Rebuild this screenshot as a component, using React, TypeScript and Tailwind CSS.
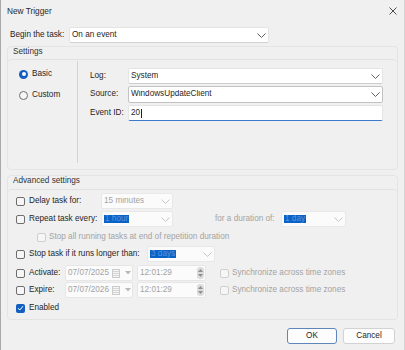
import React from "react";

const font = "font-['Liberation_Sans',Arial,sans-serif]";

function Chevron({ faded = false }: { faded?: boolean }) {
  return (
    <svg width="9" height="5" viewBox="0 0 9 5" className="shrink-0">
      <path
        d="M0.5 0.5 L4.5 4.5 L8.5 0.5"
        fill="none"
        stroke={faded ? "#c6c6c6" : "#5f5f5f"}
        strokeWidth="1"
      />
    </svg>
  );
}

function Combo({
  className = "",
  children,
  faded = false,
  border = "border-[#e4e4e4] border-b-[#cdcdcd]",
}: {
  className?: string;
  children: React.ReactNode;
  faded?: boolean;
  border?: string;
}) {
  return (
    <div
      className={`h-[16px] flex items-center justify-between border rounded-[2px] pl-[2px] pr-[2px] ${
        faded ? "bg-[#fbfbfb] text-[#a3a3a3]" : "bg-white"
      } ${border} ${className}`}
    >
      <span className="truncate">{children}</span>
      <Chevron faded={faded} />
    </div>
  );
}

function Picked({ children }: { children: React.ReactNode }) {
  return <span className="bg-[#0b62c6] text-[#5a93dd] px-[1px] py-[1px]">{children}</span>;
}

function Check({ faded = false, checked = false }: { faded?: boolean; checked?: boolean }) {
  if (checked) {
    return (
      <div className="w-[9px] h-[9px] shrink-0 rounded-[2px] bg-[#135fc0] flex items-center justify-center">
        <svg width="7" height="6" viewBox="0 0 7 6">
          <path d="M1 3.2 L2.8 5 L6 1.2" stroke="white" fill="none" strokeWidth="1" />
        </svg>
      </div>
    );
  }
  return (
    <div
      className={`w-[9px] h-[9px] shrink-0 rounded-[2px] border bg-[#f6f6f6] ${
        faded ? "border-[#cfcfcf]" : "border-[#6e6e6e]"
      }`}
    />
  );
}

function Radio({ on = false }: { on?: boolean }) {
  if (on) {
    return (
      <div className="w-[9px] h-[9px] shrink-0 rounded-full bg-[#135fc0] flex items-center justify-center">
        <div className="w-[4px] h-[4px] rounded-full bg-white" />
      </div>
    );
  }
  return <div className="w-[9px] h-[9px] shrink-0 rounded-full border border-[#6e6e6e] bg-[#f6f6f6]" />;
}

function CalendarIcon() {
  return (
    <svg width="8" height="9" viewBox="0 0 8 9" className="shrink-0">
      <rect x="0.5" y="0.5" width="7" height="8" fill="#f4f4f4" stroke="#cbcbcb" />
      <path d="M1 2.5 H7 M1 4.5 H7 M1 6.5 H7" stroke="#d6d6d6" strokeWidth="1" />
    </svg>
  );
}

function DateField({ value }: { value: string }) {
  return (
    <div className="w-[68px] h-[16px] flex items-center border border-[#e6e6e6] rounded-[2px] bg-[#fbfbfb] pl-[2px] pr-[1px] text-[#a3a3a3]">
      <span className="flex-1">{value}</span>
      <CalendarIcon />
      <svg width="6" height="4" viewBox="0 0 6 4" className="ml-[5px] shrink-0">
        <path d="M0 0 H6 L3 3.5 Z" fill="#b9b9b9" />
      </svg>
    </div>
  );
}

function TimeField({ value }: { value: string }) {
  return (
    <div className="w-[69px] h-[16px] flex items-center border border-[#e6e6e6] rounded-[2px] bg-[#fbfbfb] pl-[2px] pr-[1px] text-[#a3a3a3]">
      <span className="flex-1">{value}</span>
      <svg width="7" height="12" viewBox="0 0 7 12" className="shrink-0">
        <rect x="0" y="0" width="7" height="12" rx="3" fill="#dcdcdc" />
        <path d="M1 5 L3.5 2 L6 5 Z" fill="#8f8f8f" />
        <path d="M1 7 L3.5 10 L6 7 Z" fill="#8f8f8f" />
      </svg>
    </div>
  );
}

export default function App() {
  return (
    <div
      className={`${font} w-[405px] h-[350px] bg-[#f0f0f0] border-l border-r border-l-[#a9a9a9] border-r-[#d4d4d4] text-[8.2px] leading-none text-[#1f1f1f] overflow-hidden`}
    >
      {/* title bar */}
      <div className="h-[22px] flex items-center justify-between pl-[6px] pr-[7px]">
        <span className="text-[8.3px] text-[#2a2a2a]">New Trigger</span>
        <svg width="8" height="8" viewBox="0 0 8 8">
          <path d="M0.5 0.5 L7.5 7.5 M7.5 0.5 L0.5 7.5" stroke="#3c3c3c" strokeWidth="0.9" />
        </svg>
      </div>

      {/* begin the task */}
      <div className="mt-[5px] h-[16px] flex items-center pl-[9px]">
        <span className="w-[59px]">Begin the task:</span>
        <Combo className="w-[200px]" border="border-[#e4e4e4] border-b-[#d2d2d2]">
          On an event
        </Combo>
      </div>

      {/* settings group */}
      <div className="mt-[3px] ml-[6px] w-[391px] h-[124px] border border-[#e4e4e4] rounded-[4px] flex flex-col">
        <div className="h-[12px] pl-[5px] leading-[10px] text-[#333]">Settings</div>
        <div className="flex-1 flex border-t border-[#e2e2e2] rounded-[4px]">
          <div className="w-[69px] pl-[11px] pt-[6px] flex flex-col gap-[5px]">
            <div className="h-[16px] flex items-center gap-[4px]">
              <Radio on />
              <span>Basic</span>
            </div>
            <div className="h-[16px] flex items-center gap-[4px]">
              <Radio />
              <span>Custom</span>
            </div>
          </div>
          <div className="w-px bg-[#d3d3d3] mt-[1px] mb-[6px]" />
          <div className="flex-1 pl-[12px] pt-[8px] flex flex-col gap-[2px]">
            <div className="h-[16px] flex items-center">
              <span className="w-[38px]">Log:</span>
              <Combo className="w-[255px]">System</Combo>
            </div>
            <div className="h-[17px] flex items-center">
              <span className="w-[38px]">Source:</span>
              <Combo className="w-[255px] h-[17px]" border="border-[#c2c2c2]">
                WindowsUpdateClient
              </Combo>
            </div>
            <div className="h-[16px] flex items-center">
              <span className="w-[38px]">Event ID:</span>
              <div className="w-[255px] h-[16px] flex items-center bg-white border border-[#e4e4e4] border-b-[#3d78cf] rounded-[2px] pl-[2px]">
                <span>20</span>
                <span className="w-px h-[9px] bg-[#1f1f1f] ml-[1px]" />
              </div>
            </div>
          </div>
        </div>
      </div>

      {/* advanced settings group */}
      <div className="mt-[5px] ml-[6px] w-[391px] h-[145px] border border-[#e4e4e4] rounded-[4px] flex flex-col">
        <div className="h-[13px] pl-[5px] leading-[10px] text-[#333]">Advanced settings</div>
        <div className="flex-1 border-t border-[#e2e2e2] rounded-[4px] pl-[8px] pt-[3px] flex flex-col">
          <div className="h-[16px] flex items-center">
            <Check />
            <span className="ml-[4px] w-[72px]">Delay task for:</span>
            <Combo className="w-[72px]" faded border="border-[#e8e8e8]">
              15 minutes
            </Combo>
          </div>

          <div className="mt-[2px] h-[16px] flex items-center">
            <Check />
            <span className="ml-[4px] w-[72px]">Repeat task every:</span>
            <Combo className="w-[72px]" faded border="border-[#e8e8e8]">
              <Picked>1 hour</Picked>
            </Combo>
            <span className="ml-[42px] w-[66px] text-[#a3a3a3]">for a duration of:</span>
            <Combo className="w-[65px]" faded border="border-[#e8e8e8]">
              <Picked>1 day</Picked>
            </Combo>
          </div>

          <div className="mt-[2px] h-[16px] flex items-center pl-[21px]">
            <Check faded />
            <span className="ml-[3px] text-[#a3a3a3]">
              Stop all running tasks at end of repetition duration
            </span>
          </div>

          <div className="mt-[1px] h-[16px] flex items-center">
            <Check />
            <span className="ml-[4px] w-[118px]">Stop task if it runs longer than:</span>
            <Combo className="w-[68px]" faded border="border-[#e8e8e8]">
              <Picked>3 days</Picked>
            </Combo>
          </div>

          <div className="mt-[3px] h-[16px] flex items-center">
            <Check />
            <span className="ml-[4px] w-[36px]">Activate:</span>
            <DateField value="07/07/2025" />
            <div className="ml-[4px]">
              <TimeField value="12:01:29" />
            </div>
            <div className="ml-[14px]">
              <Check faded />
            </div>
            <span className="ml-[3px] text-[#a3a3a3]">Synchronize across time zones</span>
          </div>

          <div className="mt-[1px] h-[16px] flex items-center">
            <Check />
            <span className="ml-[4px] w-[36px]">Expire:</span>
            <DateField value="07/07/2026" />
            <div className="ml-[4px]">
              <TimeField value="12:01:29" />
            </div>
            <div className="ml-[14px]">
              <Check faded />
            </div>
            <span className="ml-[3px] text-[#a3a3a3]">Synchronize across time zones</span>
          </div>

          <div className="mt-[2px] h-[16px] flex items-center">
            <Check checked />
            <span className="ml-[4px]">Enabled</span>
          </div>
        </div>
      </div>

      {/* buttons */}
      <div className="mt-[8px] flex justify-end gap-[6px] pr-[9px]">
        <button className="w-[50px] h-[16px] rounded-[3px] border border-[#5e86b8] bg-[#fdfdfd] text-[#1f1f1f] leading-none">
          OK
        </button>
        <button className="w-[52px] h-[16px] rounded-[3px] border border-[#d2d2d2] bg-[#fdfdfd] text-[#1f1f1f] leading-none">
          Cancel
        </button>
      </div>
    </div>
  );
}
